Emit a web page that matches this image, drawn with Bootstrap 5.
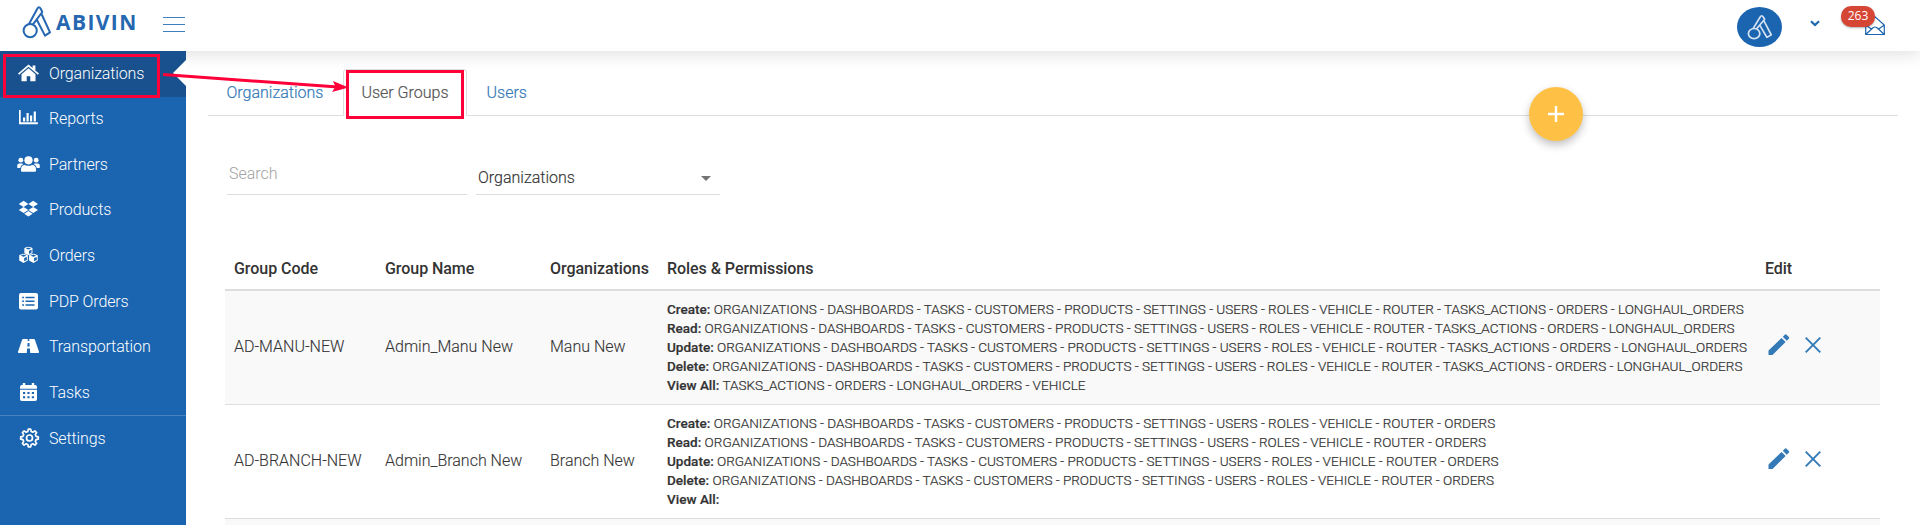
<!DOCTYPE html>
<html lang="en">
<head>
<meta charset="utf-8">
<title>Abivin</title>
<meta name="viewport" content="width=device-width, initial-scale=1">
<link rel="stylesheet" href="https://cdn.jsdelivr.net/npm/bootstrap@5.3.0/dist/css/bootstrap.min.css">
<style>
  body { font-family: Roboto, "Liberation Sans", sans-serif; font-size: 16px; font-weight: 300; color: #333; height: 525px; overflow: hidden; line-height: 1.42857; }
  .topbar { height: 51px; box-shadow: 0 2px 18px rgba(0,0,0,.14); z-index: 1; }
  .brand-mark { width: 30px; height: 34px; margin: 5px 0 0 22px; color: #2567b0; }
  .brand-text { font: 700 21px/24px "Open Sans", sans-serif; letter-spacing: 1.4px; color: #2567b0; margin: 10px 0 0 4px; width: 81px; }
  .burger { width: 22px; height: 16px; margin: 17px 0 0 26px; }
  .avatar { width: 45px; height: 40px; margin-top: 7px; background: #1b65b0; border-radius: 50%; color: #d5e3f2; }
  .caret { width: 10px; height: 7px; margin: 20px 0 0 28px; }
  .mail { width: 20px; height: 20px; margin: 16px 35px 0 45px; }
  .mail svg { display: block; }
  .count { position: absolute; left: -24px; top: -10px; width: 34px; height: 21px; border-radius: 10px; background: #d64635; color: #fff; font: 400 12px/20px "Open Sans", sans-serif; text-align: center; box-shadow: 0 1px 2px rgba(0,0,0,.3); }
  .shell { height: 474px; }
  .side { width: 186px; height: 474px; background: #1b65b0; z-index: 2; }
  .side .nav-link { height: 45.55px; padding: 1px 0 0 17px; color: #fff; display: flex; align-items: center; letter-spacing: -.13px; }
  .side .nav-link.active { background: #18518e; }
  .side svg { width: 23px; height: 20px; margin-right: 9px; flex: none; margin-top: -3px; }
  .side .rule { border-top: 1px solid #4983c0; }
  .notch { position: absolute; right: 0; top: 9px; border: solid transparent; border-width: 13.5px 13px 13.5px 0; border-right-color: #fff; }
  .page { padding: 18px 22px 0 22px; }
  .page .nav-tabs { height: 47px; border-bottom: 1px solid #ddd; }
  .page .nav-tabs .nav-link { height: 47px; padding: 0 17px; line-height: 46px; margin-right: 2px; color: #337ab7; border-radius: 4px 4px 0 0; -webkit-text-stroke: .2px; }
  .page .nav-tabs li:first-child { margin-left: .5px; }
  .page .nav-tabs .nav-link.active { color: #555; border-color: #ddd #ddd #fff; }
  .filters { margin: 45px 0 0 19px; height: 34px; gap: 9px; }
  .field { border: 0; border-bottom: 1px solid #ddd; border-radius: 0; padding: 0 2px; background: none; font: inherit; color: #333; }
  .field.search { width: 240px; padding-bottom: 6px; }
  .field.search::placeholder { color: #a2a2a2; opacity: 1; }
  .field.pick { width: 244px; padding-top: 1px; -webkit-text-stroke: .15px; }
  .field.pick svg { margin-right: 7px; }
  .grid { width: 1655px; margin: 52px 0 0 17px; table-layout: fixed; color: #333; --bs-table-striped-bg: #f9f9f9; --bs-table-striped-color: #333; --bs-table-color: #333; }
  .grid th, .grid td { padding: 9px; vertical-align: middle; border: 0; }
  .grid th { font-weight: 500; height: 43px; padding: 10px 9px 9px; border-bottom: 2px solid #ddd; line-height: 23px; letter-spacing: -.05px; }
  .grid tbody tr { height: 114px; border-bottom: 1px solid #ddd; }
  .grid td { -webkit-text-stroke: .1px; }
  .grid .perm { font-size: 13.55px; line-height: 19px; white-space: nowrap; -webkit-text-stroke: .2px; }
  .perm b { font-weight: 500; }
  .tools { color: #337ab7; gap: 14px; padding-left: 2px; margin-top: -6px; }
  .fab { position: absolute; left: 1529px; top: 87px; width: 54px; height: 54px; border-radius: 50%; background: #ffc145; box-shadow: 0 4px 9px rgba(0,0,0,.25); z-index: 3; }
  .marks { position: absolute; left: 0; top: 0; z-index: 5; pointer-events: none; }
</style>
</head>
<body class="bg-white position-relative">
<svg width="0" height="0" class="position-absolute" aria-hidden="true">
  <symbol id="mark" viewBox="0 0 30 34"><g fill="none" stroke="currentColor" stroke-width="2" stroke-linejoin="round"><circle cx="8.2" cy="25.6" r="6.6"/><path d="M7 19 15.3 3.8q1.6-3 3.4 0L20.3 7 10.8 19.6M14.8 14.7 23 30.6 28 27.3 19.3 8.5"/></g></symbol>
  <symbol id="pencil" viewBox="0 0 24 24"><path fill="currentColor" d="M1.5 17.5 14.6 4.9l4 4L5.5 21.9H1.5zM15.8 3.7l2-2q.9-.9 1.8 0l2.2 2.2q.9.9 0 1.8l-2 2z"/></symbol>
  <symbol id="cross" viewBox="0 0 16 16"><path d="m.7.7 14.6 14.6m0-14.6L.7 15.3" stroke="currentColor" stroke-width="1.9"/></symbol>
  <symbol id="cube" viewBox="0 0 10 10"><path fill="#fff" fill-rule="evenodd" d="M5 0 9.5 1.8V7.4L5 9.8.5 7.4V1.8zM5 1.1 2 2.3 5 3.4 8 2.3zM5.7 8.2 8.5 6.8V3.6L5.7 4.7z"/></symbol>
</svg>

<header class="topbar d-flex position-relative bg-white">
  <svg class="brand-mark"><use href="#mark"/></svg>
  <div class="brand-text">ABIVIN</div>
  <svg class="burger" viewBox="0 0 22 16" stroke="#3f7fbe" stroke-width="1"><path d="M0 .5h22M0 7.5h22M0 14.5h22"/></svg>
  <div class="avatar ms-auto d-flex justify-content-center align-items-center"><svg width="26" height="26" viewBox="0 0 30 34" preserveAspectRatio="none"><use href="#mark"/></svg></div>
  <svg class="caret" viewBox="0 0 10 7"><path d="m1 1.3 4 3.7 4-3.7" fill="none" stroke="#1b65b0" stroke-width="2.2"/></svg>
  <div class="mail position-relative">
    <svg width="20" height="20" viewBox="0 0 20 20" fill="none" stroke="#1b65b0" stroke-width="1.2"><path d="M.7 9 10 .8 19.3 9v9.5H.7zM.7 9l6 4.2M19.3 9l-6 4.2M.7 18.5 8 11.8q2-1.6 4 0l7.3 6.7"/></svg>
    <span class="count">263</span>
  </div>
</header>

<div class="shell d-flex overflow-hidden">
  <nav class="side nav flex-column flex-nowrap position-relative flex-shrink-0">
    <a class="nav-link active" href="#"><svg viewBox="0 0 23 20" fill="#fff"><path d="M11.5 1.5 15.6 5V2.6h2.8v4.8l3.6 3.1-1.1 1.3-9.4-8-9.4 8L1 10.5zM11.5 5.3l7 6v6.9h-5.2v-5H9.7v5H4.5v-6.9z"/></svg>Organizations<span class="notch"></span></a>
    <a class="nav-link" href="#"><svg viewBox="0 0 23 20" fill="#fff"><path d="M2 2h1.7v12.3h17.2v1.9H2zM6 9.5h2.2v4H6zM9.5 5h2.2v8.5H9.5zM13 7.5h2.2v6H13zM16.7 3.5h2.2v10h-2.2z"/></svg>Reports</a>
    <a class="nav-link" href="#"><svg viewBox="0 0 23 20" fill="#fff"><circle cx="11.5" cy="6.3" r="4.1"/><circle cx="3.8" cy="6.2" r="2.4"/><circle cx="19.2" cy="6.2" r="2.4"/><path d="M5 17.8q-1 0-1-1v-1.6q0-4 4-4.2 3.5 1.7 7 0 4 .2 4 4.2v1.6q0 1-1 1zM.2 13.5v-1.7q0-2.2 2.1-2.2h2.9l1 .7q-2.6 1-3 3.7H.7zM22.8 13.5v-1.7q0-2.2-2.1-2.2h-2.9l-1 .7q2.6 1 3 3.7h2.5z"/></svg>Partners</a>
    <a class="nav-link" href="#"><svg viewBox="0 0 23 20" fill="#fff"><path d="m6.6 1.8 4.8 3.1-4.8 3.1-4.8-3.1zM16.2 1.8 21 4.9 16.2 8l-4.8-3.1zM6.6 7.9l4.8 3.1-4.8 3.1L1.8 11zM16.2 7.9 21 11l-4.8 3.1-4.8-3.1zM11.4 12l4.2 2.7-4.2 2.8-4.2-2.8z"/></svg>Products</a>
    <a class="nav-link" href="#"><svg viewBox="0 0 23 20"><use href="#cube" x="6.5" y="1.5" width="9.8" height="9"/><use href="#cube" x="1.6" y="8.5" width="9.8" height="9.6"/><use href="#cube" x="11.5" y="8.5" width="9.8" height="9.6"/></svg>Orders</a>
    <a class="nav-link" href="#"><svg viewBox="0 0 23 20"><rect x="2" y="2" width="19" height="16.5" rx="2" fill="#fff"/><path d="M8.5 6.5h9M8.5 10.3h9M8.5 14h9M5.2 6.5h1.8M5.2 10.3h1.8M5.2 14h1.8" stroke="#1b65b0" stroke-width="1.4"/></svg>PDP Orders</a>
    <a class="nav-link" href="#"><svg viewBox="0 0 23 20"><path fill="#fff" d="M6.2 3h10.6q.8 0 1.1.8L22 15.8q.2 1.2-.8 1.2H1.800q-1 0-.8-1.2l4.1-12q.3-.8 1.1-.8z"/><path fill="#1b65b0" d="M10.8 3h1.4l.1 2h-1.6zM10.6 7h1.8l.3 3.6h-2.4zM10.1 12.6h2.8l.3 4.4H9.8z"/></svg>Transportation</a>
    <a class="nav-link" href="#"><svg viewBox="0 0 23 20"><path fill="#fff" d="M5.8 1h2.4v2h6.6V1h2.4v2H18q2 0 2 2v1.7H3V5q0-2 2-2h.8zM3 7.8h17v9.4q0 1.8-1.8 1.8H4.8Q3 19 3 17.2z"/><path d="M6 11h2.2M10.4 11h2.2M14.8 11H17M6 15.2h2.2M10.4 15.2h2.2M14.8 15.2H17" stroke="#1b65b0" stroke-width="2"/></svg>Tasks</a>
    <a class="nav-link rule" href="#"><svg viewBox="0 0 23 20" fill="none" stroke="#fff" stroke-width="1.7" stroke-linejoin="round"><path d="M11.3 1.2h2.4l.5 2.3 1.7.7 2-1.3 1.7 1.7-1.3 2 .7 1.7 2.3.5v2.4l-2.3.5-.7 1.7 1.3 2-1.7 1.7-2-1.3-1.7.7-.5 2.3h-2.4l-.5-2.3-1.7-.7-2 1.3-1.7-1.7 1.3-2-.7-1.7-2.3-.5V8.8l2.3-.5.7-1.7-1.3-2 1.7-1.7 2 1.3 1.7-.7z"/><circle cx="12.5" cy="10" r="3"/></svg>Settings</a>
  </nav>

  <main class="page flex-grow-1">
    <ul class="nav nav-tabs">
      <li class="nav-item"><a class="nav-link" href="#">Organizations</a></li>
      <li class="nav-item"><a class="nav-link active" href="#">User Groups</a></li>
      <li class="nav-item"><a class="nav-link" href="#">Users</a></li>
    </ul>
    <div class="filters d-flex">
      <input class="field search" placeholder="Search" aria-label="Search">
      <div class="field pick d-flex align-items-center justify-content-between"><span>Organizations</span><svg width="10" height="5" viewBox="0 0 10 5"><path d="M0 0h10L5 5z" fill="#757575"/></svg></div>
    </div>
    <table class="table table-striped grid mb-0">
      <colgroup><col style="width:151px"><col style="width:165px"><col style="width:117px"><col style="width:1098px"><col style="width:124px"></colgroup>
      <thead><tr><th>Group Code</th><th>Group Name</th><th>Organizations</th><th>Roles &amp; Permissions</th><th>Edit</th></tr></thead>
      <tbody>
        <tr>
          <td>AD-MANU-NEW</td><td>Admin_Manu New</td><td>Manu New</td>
          <td class="perm">
            <div><b>Create:</b> ORGANIZATIONS - DASHBOARDS - TASKS - CUSTOMERS - PRODUCTS - SETTINGS - USERS - ROLES - VEHICLE - ROUTER - TASKS_ACTIONS - ORDERS - LONGHAUL_ORDERS</div>
            <div><b>Read:</b> ORGANIZATIONS - DASHBOARDS - TASKS - CUSTOMERS - PRODUCTS - SETTINGS - USERS - ROLES - VEHICLE - ROUTER - TASKS_ACTIONS - ORDERS - LONGHAUL_ORDERS</div>
            <div><b>Update:</b> ORGANIZATIONS - DASHBOARDS - TASKS - CUSTOMERS - PRODUCTS - SETTINGS - USERS - ROLES - VEHICLE - ROUTER - TASKS_ACTIONS - ORDERS - LONGHAUL_ORDERS</div>
            <div><b>Delete:</b> ORGANIZATIONS - DASHBOARDS - TASKS - CUSTOMERS - PRODUCTS - SETTINGS - USERS - ROLES - VEHICLE - ROUTER - TASKS_ACTIONS - ORDERS - LONGHAUL_ORDERS</div>
            <div><b>View All:</b> TASKS_ACTIONS - ORDERS - LONGHAUL_ORDERS - VEHICLE</div>
          </td>
          <td><div class="tools d-flex align-items-center"><svg width="24" height="24"><use href="#pencil"/></svg><svg width="16" height="16"><use href="#cross"/></svg></div></td>
        </tr>
        <tr>
          <td>AD-BRANCH-NEW</td><td>Admin_Branch New</td><td>Branch New</td>
          <td class="perm">
            <div><b>Create:</b> ORGANIZATIONS - DASHBOARDS - TASKS - CUSTOMERS - PRODUCTS - SETTINGS - USERS - ROLES - VEHICLE - ROUTER - ORDERS</div>
            <div><b>Read:</b> ORGANIZATIONS - DASHBOARDS - TASKS - CUSTOMERS - PRODUCTS - SETTINGS - USERS - ROLES - VEHICLE - ROUTER - ORDERS</div>
            <div><b>Update:</b> ORGANIZATIONS - DASHBOARDS - TASKS - CUSTOMERS - PRODUCTS - SETTINGS - USERS - ROLES - VEHICLE - ROUTER - ORDERS</div>
            <div><b>Delete:</b> ORGANIZATIONS - DASHBOARDS - TASKS - CUSTOMERS - PRODUCTS - SETTINGS - USERS - ROLES - VEHICLE - ROUTER - ORDERS</div>
            <div><b>View All:</b></div>
          </td>
          <td><div class="tools d-flex align-items-center"><svg width="24" height="24"><use href="#pencil"/></svg><svg width="16" height="16"><use href="#cross"/></svg></div></td>
        </tr>
        <tr><td></td><td></td><td></td><td></td><td></td></tr>
      </tbody>
    </table>
  </main>
</div>

<button class="fab border-0 d-flex align-items-center justify-content-center p-0" aria-label="Add"><svg width="16" height="16" viewBox="0 0 16 16"><path d="M8 0v16M0 8h16" stroke="#fff" stroke-width="2.4"/></svg></button>

<svg class="marks" width="480" height="130" fill="none" stroke="#ff0038" stroke-width="3">
  <path d="M4.5 55.5H158.5V96.5H4.5zM347.5 71.5H462.5V117.5H347.5z"/>
  <path d="M163 74.5 338 87"/>
  <path d="M348.5 87.500 332 92 335.5 86.8 333 81z" fill="#ff0038" stroke="none"/>
</svg>
<script src="https://cdn.jsdelivr.net/npm/bootstrap@5.3.0/dist/js/bootstrap.bundle.min.js"></script>
</body>
</html>
